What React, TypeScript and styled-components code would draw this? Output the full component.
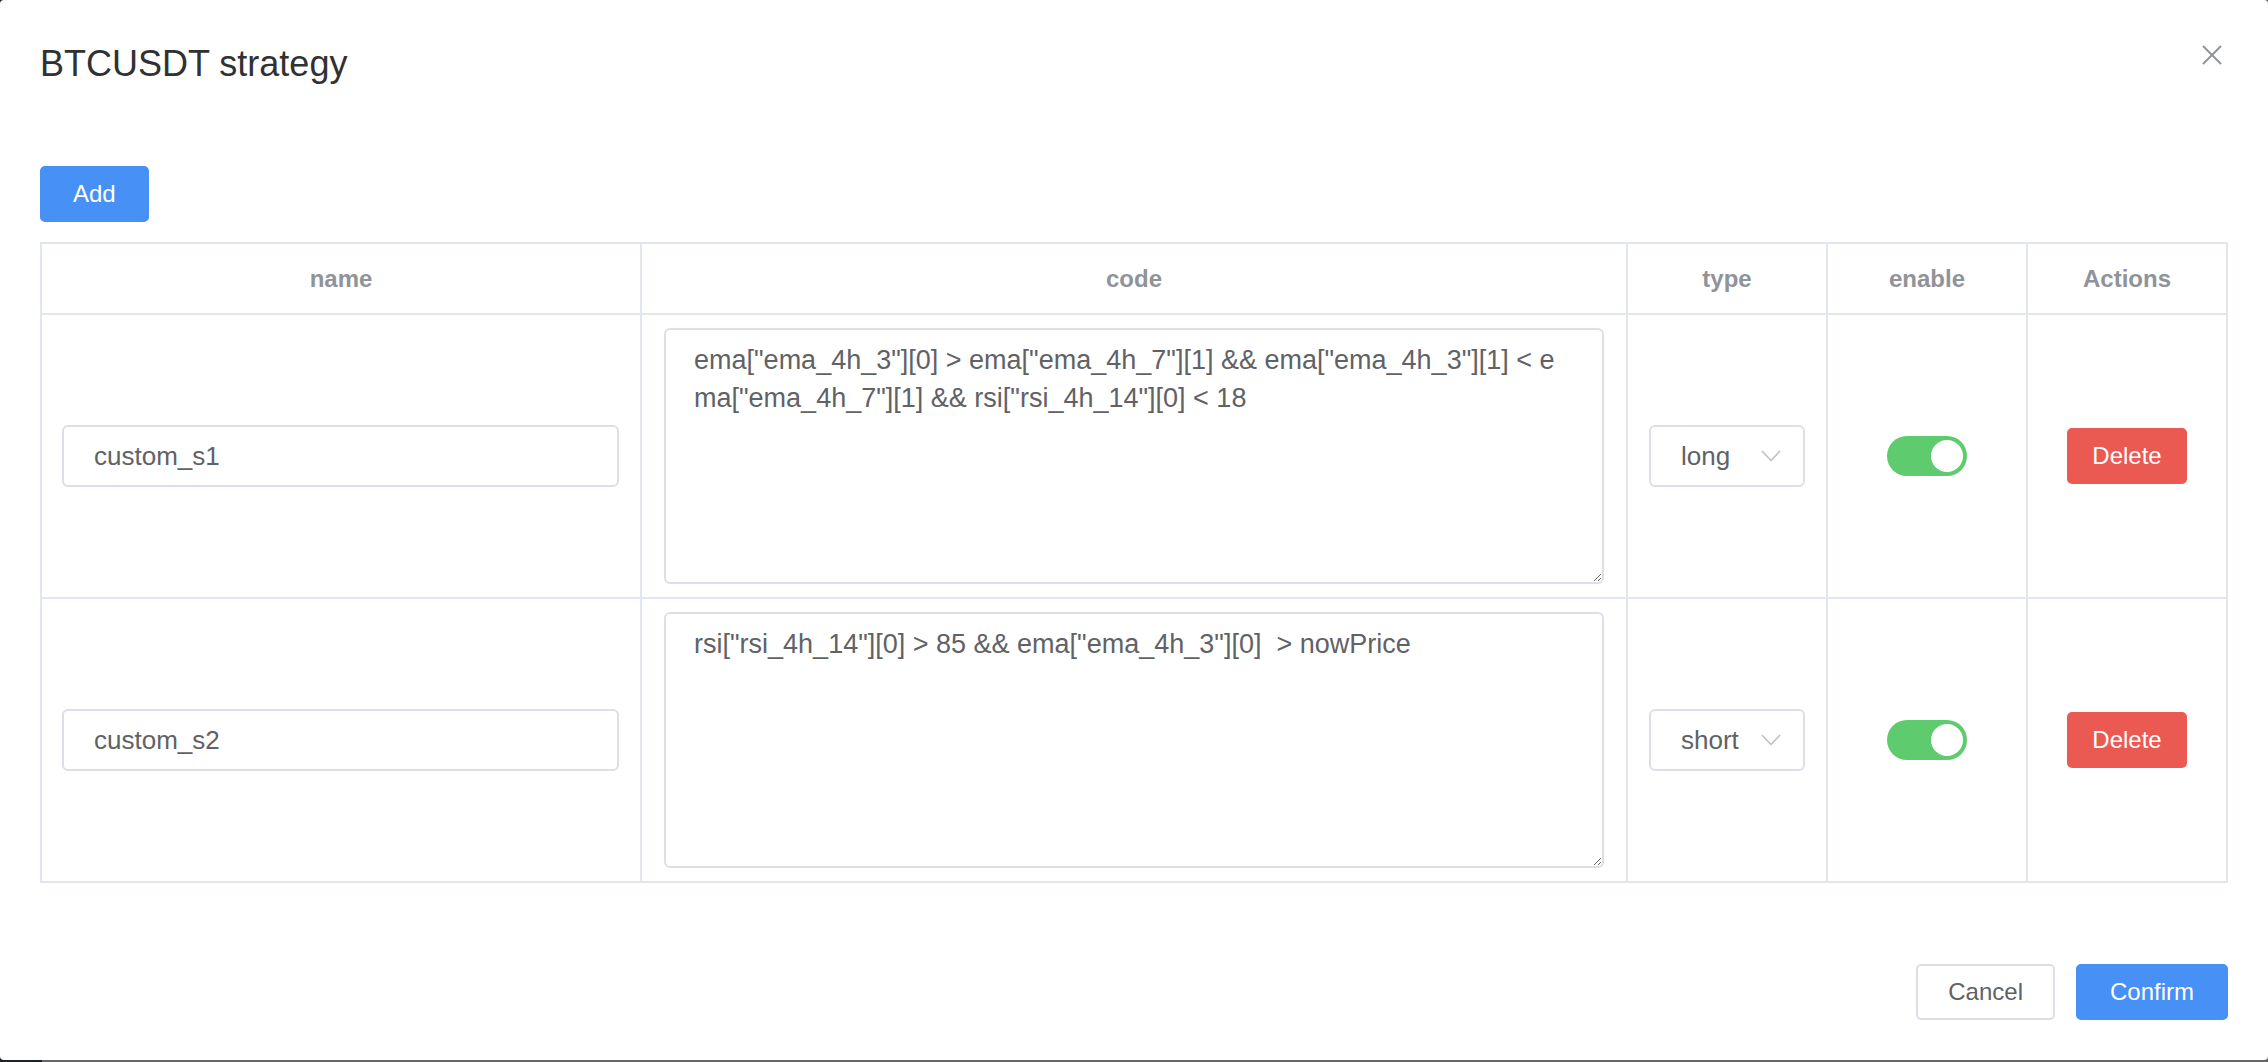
import React, { useState } from "react";
import styled, { createGlobalStyle } from "styled-components";

const GlobalStyle = createGlobalStyle`
  html, body {
    margin: 0;
    padding: 0;
  }
  body {
    height: 100vh;
    background: linear-gradient(to right, #1f2229 42px, #666666 42px);
    font-family: "Liberation Sans", Arial, sans-serif;
    overflow: hidden;
  }
  * { box-sizing: border-box; }
`;

const Dialog = styled.div`
  background: #ffffff;
  height: calc(100vh - 2px);
  border-radius: 4px;
  display: flex;
  flex-direction: column;
`;

const Header = styled.header`
  display: flex;
  justify-content: space-between;
  align-items: flex-start;
  padding: 44px 46px 0 40px;
`;

const Title = styled.h1`
  margin: 0;
  font-size: 36px;
  line-height: 40px;
  font-weight: 400;
  color: #303133;
`;

const CloseButton = styled.button`
  margin-top: 1px;
  width: 20px;
  height: 20px;
  padding: 0;
  border: none;
  background: transparent;
  cursor: pointer;
  display: flex;
`;

const Body = styled.main`
  padding: 82px 40px 0 40px;
  display: flex;
  flex-direction: column;
  align-items: flex-start;
  gap: 20px;
`;

const Button = styled.button<{ $variant?: "primary" | "danger" | "plain"; $pad?: number }>`
  height: 56px;
  padding: 0 ${(p) => p.$pad ?? 31}px;
  font-family: "Liberation Sans", Arial, sans-serif;
  font-size: 24px;
  border-radius: 5px;
  cursor: pointer;
  border: 2px solid
    ${(p) => (p.$variant === "danger" ? "#eb5a52" : p.$variant === "plain" ? "#dcdfe6" : "#4790f5")};
  background: ${(p) => (p.$variant === "danger" ? "#eb5a52" : p.$variant === "plain" ? "#ffffff" : "#4790f5")};
  color: ${(p) => (p.$variant === "plain" ? "#606266" : "#ffffff")};
`;

const Table = styled.div`
  align-self: stretch;
  display: grid;
  grid-template-columns: 598px 984px 198px 198px 198px;
  grid-auto-rows: 282px;
  grid-template-rows: 69px;
  gap: 2px;
  border: 2px solid #e2e6ee;
  background: #e2e6ee;
`;

const HeadCell = styled.div`
  background: #ffffff;
  display: flex;
  align-items: center;
  justify-content: center;
  font-size: 24px;
  font-weight: 700;
  color: #909399;
`;

const Cell = styled.div<{ $pad?: string }>`
  background: #ffffff;
  display: flex;
  align-items: center;
  justify-content: center;
  padding: ${(p) => p.$pad ?? "0 21px"};
`;

const TextInput = styled.input`
  width: 100%;
  height: 62px;
  padding: 0 30px;
  border: 2px solid #dcdfe6;
  border-radius: 6px;
  font-family: "Liberation Sans", Arial, sans-serif;
  font-size: 26px;
  color: #606266;
  outline: none;
`;

const CodeArea = styled.textarea`
  display: block;
  width: 100%;
  height: 256px;
  padding: 11px 28px;
  border: 2px solid #dcdfe6;
  border-radius: 6px;
  font-family: "Liberation Sans", Arial, sans-serif;
  font-size: 27px;
  line-height: 38px;
  color: #606266;
  word-break: break-all;
  resize: vertical;
  outline: none;
`;

const SelectBox = styled.div`
  width: 156px;
  height: 62px;
  padding: 0 22px 0 30px;
  border: 2px solid #dcdfe6;
  border-radius: 6px;
  display: flex;
  align-items: center;
  justify-content: space-between;
  font-size: 26px;
  color: #606266;
  cursor: pointer;
`;

const SwitchTrack = styled.button<{ $on: boolean }>`
  width: 80px;
  height: 40px;
  padding: 0 4px;
  border: none;
  border-radius: 20px;
  background: ${(p) => (p.$on ? "#5ecb6f" : "#dcdfe6")};
  display: flex;
  align-items: center;
  justify-content: ${(p) => (p.$on ? "flex-end" : "flex-start")};
  cursor: pointer;
`;

const SwitchKnob = styled.span`
  width: 32px;
  height: 32px;
  border-radius: 50%;
  background: #ffffff;
`;

const Footer = styled.footer`
  margin-top: 81px;
  padding: 0 40px;
  display: flex;
  justify-content: flex-end;
  gap: 21px;
`;

const Chevron = () => (
  <svg width="20" height="12" viewBox="0 0 20 12" fill="none">
    <polyline points="1,1 10,10.5 19,1" stroke="#c0c4cc" strokeWidth="1.8" />
  </svg>
);

const CloseIcon = () => (
  <svg width="20" height="20" viewBox="0 0 20 20" fill="none">
    <line x1="1" y1="1" x2="19" y2="19" stroke="#909399" strokeWidth="2" />
    <line x1="19" y1="1" x2="1" y2="19" stroke="#909399" strokeWidth="2" />
  </svg>
);

type Strategy = { name: string; code: string; type: string; enable: boolean };

const initial: Strategy[] = [
  {
    name: "custom_s1",
    code: 'ema["ema_4h_3"][0] > ema["ema_4h_7"][1] && ema["ema_4h_3"][1] < ema["ema_4h_7"][1] && rsi["rsi_4h_14"][0] < 18',
    type: "long",
    enable: true,
  },
  {
    name: "custom_s2",
    code: 'rsi["rsi_4h_14"][0] > 85 && ema["ema_4h_3"][0]  > nowPrice',
    type: "short",
    enable: true,
  },
];

const Switch = ({ on, onToggle }: { on: boolean; onToggle: () => void }) => (
  <SwitchTrack $on={on} onClick={onToggle} aria-pressed={on}>
    <SwitchKnob />
  </SwitchTrack>
);

export default function App() {
  const [rows, setRows] = useState<Strategy[]>(initial);

  const toggle = (i: number) =>
    setRows((r) => r.map((row, j) => (j === i ? { ...row, enable: !row.enable } : row)));

  return (
    <>
      <GlobalStyle />
      <Dialog>
        <Header>
          <Title>BTCUSDT strategy</Title>
          <CloseButton aria-label="Close">
            <CloseIcon />
          </CloseButton>
        </Header>
        <Body>
          <Button $variant="primary">Add</Button>
          <Table>
            <HeadCell>name</HeadCell>
            <HeadCell>code</HeadCell>
            <HeadCell>type</HeadCell>
            <HeadCell>enable</HeadCell>
            <HeadCell>Actions</HeadCell>
            {rows.map((row, i) => (
              <React.Fragment key={row.name}>
                <Cell $pad="0 21px 0 20px">
                  <TextInput defaultValue={row.name} />
                </Cell>
                <Cell $pad="0 22px">
                  <CodeArea defaultValue={row.code} spellCheck={false} />
                </Cell>
                <Cell>
                  <SelectBox>
                    <span>{row.type}</span>
                    <Chevron />
                  </SelectBox>
                </Cell>
                <Cell>
                  <Switch on={row.enable} onToggle={() => toggle(i)} />
                </Cell>
                <Cell>
                  <Button $variant="danger" $pad={23}>
                    Delete
                  </Button>
                </Cell>
              </React.Fragment>
            ))}
          </Table>
        </Body>
        <Footer>
          <Button $variant="plain" $pad={30}>
            Cancel
          </Button>
          <Button $variant="primary" $pad={32}>
            Confirm
          </Button>
        </Footer>
      </Dialog>
    </>
  );
}
